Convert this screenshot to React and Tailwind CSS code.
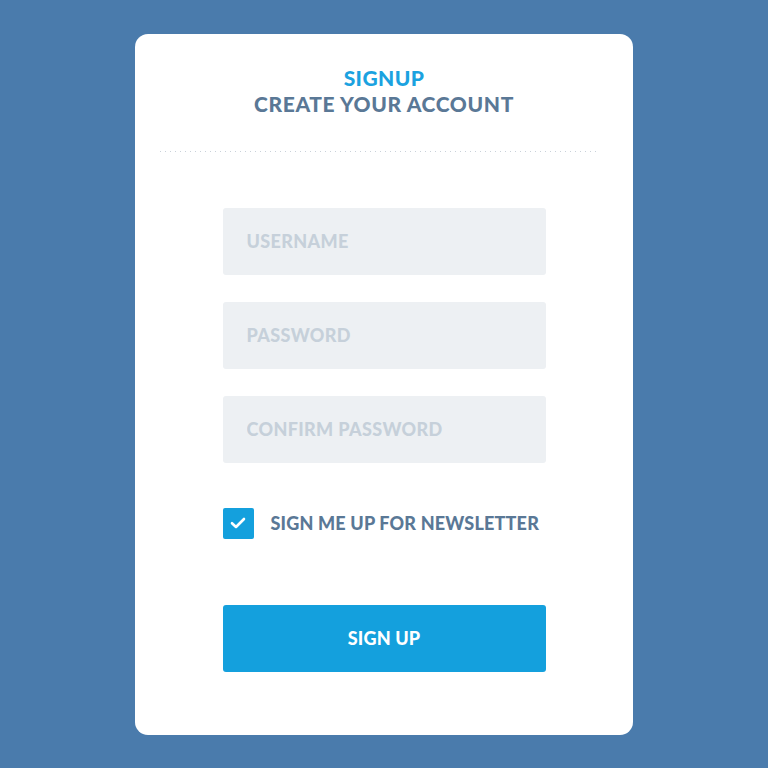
import React from 'react';

const Field = ({ placeholder, type = 'text' }) => (
  <input
    type={type}
    placeholder={placeholder}
    className="w-full h-[67px] rounded-[3px] bg-[#edf0f3] px-6 text-[18px] font-black tracking-[0.02em] text-[#5a7896] placeholder:text-[#c6d0da] outline-none"
  />
);

const App = () => {
  return (
    <div className="min-h-screen w-full bg-[#4a7bac] flex items-center justify-center font-['Lato',sans-serif]">
      <div className="w-[498px] h-[701px] bg-white rounded-[13px] flex flex-col items-center">
        {/* Header */}
        <div className="pt-[31px] text-center leading-[26px] font-black text-[21px]">
          <h1 className="text-[#1ba2e0] tracking-[0.02em]">SIGNUP</h1>
          <h2 className="text-[#5a7896] tracking-[0.03em]">CREATE YOUR ACCOUNT</h2>
        </div>
        <div className="mt-[34px] w-[440px] h-px self-start ml-[25px] bg-[linear-gradient(to_right,#c9d1d9_1px,transparent_1px)] bg-[length:5px_1px]" />

        {/* Form */}
        <form className="mt-[56px] w-[323px] flex flex-col">
          <div className="flex flex-col gap-[27px]">
            <Field placeholder="USERNAME" />
            <Field placeholder="PASSWORD" type="password" />
            <Field placeholder="CONFIRM PASSWORD" type="password" />
          </div>

          <label className="mt-[45px] flex items-center gap-[17px] cursor-pointer">
            <span className="w-[31px] h-[31px] rounded-[2px] bg-[#14a0dd] flex items-center justify-center">
              <svg width="16" height="12" viewBox="0 0 16 12" fill="none">
                <path d="M2 6.2L6 10L14 2" stroke="white" strokeWidth="2.6" strokeLinecap="round" strokeLinejoin="round" />
              </svg>
            </span>
            <span className="text-[18px] font-black tracking-[0.01em] text-[#5a7896]">SIGN ME UP FOR NEWSLETTER</span>
          </label>

          <button
            type="button"
            className="mt-[66px] h-[67px] w-full rounded-[3px] bg-[#14a0dd] text-white text-[18px] font-black tracking-[0.01em]"
          >
            SIGN UP
          </button>
        </form>
      </div>
    </div>
  );
};

export default App;
